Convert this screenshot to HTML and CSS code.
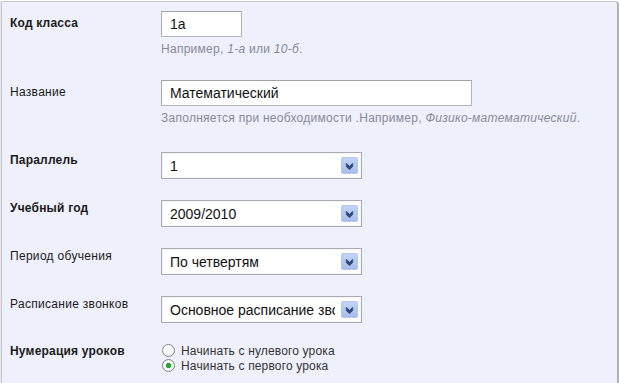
FILE: index.html
```html
<!DOCTYPE html>
<html lang="ru">
<head>
    <meta charset="UTF-8">
    <title>Класс</title>
    <link rel="stylesheet" href="styles.css">
</head>
<body>
    <div class="panel">
        <div class="row row-text first">
            <label class="field-label strong">Код класса</label>
            <div class="field">
                <input type="text" class="text-input short" value="1а">
                <div class="hint">Например, <i>1-а</i> или <i>10-б</i>.</div>
            </div>
        </div>

        <div class="row row-text second">
            <label class="field-label">Название</label>
            <div class="field">
                <input type="text" class="text-input wide" value="Математический">
                <div class="hint">Заполняется при необходимости .Например, <i>Физико-математический</i>.</div>
            </div>
        </div>

        <div class="row row-select">
            <label class="field-label strong">Параллель</label>
            <div class="field select-wrap">
                <select class="select"><option>1</option></select>
                <svg class="select-btn" width="17" height="17" viewBox="0 0 17 17"><defs><linearGradient id="g1" x1="0" y1="0" x2="0" y2="1"><stop offset="0" stop-color="#c5d5f8"/><stop offset="1" stop-color="#a5bbea"/></linearGradient></defs><rect x="0.5" y="0.5" width="16" height="16" rx="1.5" fill="url(#g1)" stroke="#b3c6ee"/><path d="M5 6.5l3.5 3.5 3.5-3.5M5 8.5l3.5 3.5 3.5-3.5" fill="none" stroke="#2f4577" stroke-width="1.4"/></svg>
            </div>
        </div>

        <div class="row row-select">
            <label class="field-label strong">Учебный год</label>
            <div class="field select-wrap">
                <select class="select"><option>2009/2010</option></select>
                <svg class="select-btn" width="17" height="17" viewBox="0 0 17 17"><rect x="0.5" y="0.5" width="16" height="16" rx="1.5" fill="url(#g1)" stroke="#b3c6ee"/><path d="M5 6.5l3.5 3.5 3.5-3.5M5 8.5l3.5 3.5 3.5-3.5" fill="none" stroke="#2f4577" stroke-width="1.4"/></svg>
            </div>
        </div>

        <div class="row row-select">
            <label class="field-label">Период обучения</label>
            <div class="field select-wrap">
                <select class="select"><option>По четвертям</option></select>
                <svg class="select-btn" width="17" height="17" viewBox="0 0 17 17"><rect x="0.5" y="0.5" width="16" height="16" rx="1.5" fill="url(#g1)" stroke="#b3c6ee"/><path d="M5 6.5l3.5 3.5 3.5-3.5M5 8.5l3.5 3.5 3.5-3.5" fill="none" stroke="#2f4577" stroke-width="1.4"/></svg>
            </div>
        </div>

        <div class="row row-select last-select">
            <label class="field-label">Расписание звонков</label>
            <div class="field select-wrap">
                <select class="select"><option>Основное расписание звонков</option></select>
                <svg class="select-btn" width="17" height="17" viewBox="0 0 17 17"><rect x="0.5" y="0.5" width="16" height="16" rx="1.5" fill="url(#g1)" stroke="#b3c6ee"/><path d="M5 6.5l3.5 3.5 3.5-3.5M5 8.5l3.5 3.5 3.5-3.5" fill="none" stroke="#2f4577" stroke-width="1.4"/></svg>
            </div>
        </div>

        <div class="row row-radio">
            <label class="field-label strong">Нумерация уроков</label>
            <div class="field radios">
                <label class="radio"><input type="radio" name="numbering"> Начинать с нулевого урока</label>
                <label class="radio"><input type="radio" name="numbering" checked> Начинать с первого урока</label>
            </div>
        </div>
    </div>
</body>
</html>
```

FILE: styles.css
```css
/* Old-school settings form, Tahoma-like metrics via Liberation Sans */
body {
    margin: 0;
    background: #ffffff;
    font-family: "Liberation Sans", Arial, sans-serif;
    font-size: 12px;
    color: #1a1a1a;
    overflow: hidden;
}

.panel {
    margin: 1px 1px 0 1px;
    height: 400px;
    background: #eef0fc;
    border-top: 1px solid #c5c9d1;
    border-left: 1px solid #c3c7cf;
    border-right: 2px solid #aeb2b9;
    border-top-right-radius: 4px;
    box-shadow: -1px 0 0 #e4e6ea;
    padding-top: 9px;
}

.row {
    display: grid;
    grid-template-columns: 159px 1fr;
}

.field-label {
    padding-left: 8px;
    line-height: 14px;
    letter-spacing: 0.3px;
}

.strong {
    font-weight: bold;
    letter-spacing: 0.2px;
}

.row-text .field-label {
    padding-top: 5px;
}

.row-select .field-label {
    padding-top: 1px;
}

.row-radio .field-label {
    padding-top: 1px;
}

.first {
    margin-bottom: 24px;
}

.second {
    margin-bottom: 27px;
}

.row-select {
    margin-bottom: 21px;
}

.last-select {
    margin-bottom: 20px;
}

.text-input {
    display: block;
    box-sizing: border-box;
    height: 26px;
    padding: 0 8px;
    font-family: "Liberation Sans", Arial, sans-serif;
    font-size: 14px;
    color: #111;
    background: #ffffff;
    border: 1px solid #b2b6bc;
    border-top-color: #9fa3a9;
    border-left-color: #a7abb1;
    outline: none;
}

.text-input.short {
    width: 81px;
}

.text-input.wide {
    width: 311px;
}

.hint {
    margin-top: 5px;
    line-height: 14px;
    color: #868b94;
    letter-spacing: 0.27px;
}

.select-wrap {
    position: relative;
    width: 201px;
}

.select {
    display: block;
    width: 201px;
    height: 27px;
    box-sizing: border-box;
    padding: 0 26px 0 8px;
    font-family: "Liberation Sans", Arial, sans-serif;
    font-size: 14px;
    color: #111;
    background: #ffffff;
    border: 1px solid #a9adb3;
    box-shadow: inset 0 0 0 1px #f4f5f7;
    -webkit-appearance: none;
    appearance: none;
    outline: none;
}

/* dropdown button drawn over the select */
.select-btn {
    position: absolute;
    top: 5px;
    right: 4px;
}

.radios {
    display: flex;
    flex-direction: column;
    padding-left: 1px;
}

.radio {
    display: flex;
    align-items: center;
    gap: 6px;
    height: 15px;
    color: #333;
    letter-spacing: 0.15px;
}

.radio input {
    -webkit-appearance: none;
    appearance: none;
    margin: 0;
    width: 13px;
    height: 13px;
    border: 1px solid #7f8790;
    border-radius: 50%;
    background: radial-gradient(circle at 40% 35%, #ffffff 30%, #e2e4e8 100%);
    box-sizing: border-box;
}

.radio input:checked {
    background: radial-gradient(circle, #2aa52a 0 2.5px, #ffffff 3px 50%, #e2e4e8 100%);
}
```
